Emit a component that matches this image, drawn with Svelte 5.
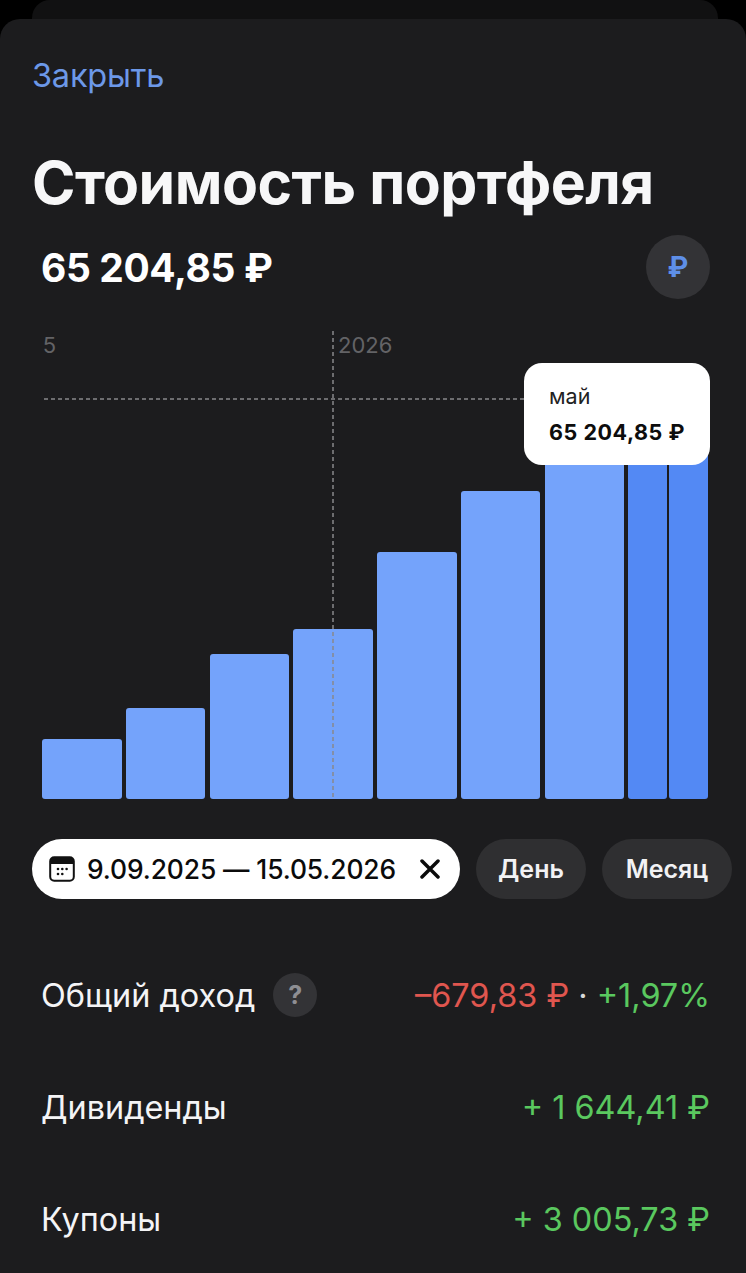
<script>
  const bars = [
    { w: 79.5, h: 60 },
    { w: 79.5, h: 91 },
    { w: 79.5, h: 145 },
    { w: 79.5, h: 170 },
    { w: 79.5, h: 247 },
    { w: 79.5, h: 308 },
    { w: 79.5, h: 350 },
    { w: 39, h: 350, active: true },
    { w: 39, h: 350, active: true, tight: true }
  ];

  const rows = [
    { label: 'Дивиденды', value: '+ 1 644,41 ₽' },
    { label: 'Купоны', value: '+ 3 005,73 ₽' }
  ];
</script>

<div class="page">
  <div class="back-card"></div>
  <div class="sheet">
    <div class="close">Закрыть</div>
    <h1>Стоимость портфеля</h1>

    <div class="total-row">
      <span class="total">65 204,85 ₽</span>
      <span class="currency">₽</span>
    </div>

    <div class="chart">
      <span class="year year-old">5</span>
      <span class="year year-new">2026</span>
      <div class="line-v"></div>
      <div class="line-h"></div>
      <div class="tooltip">
        <div class="tip-month">май</div>
        <div class="tip-value">65 204,85 ₽</div>
      </div>
      <div class="bars">
        {#each bars as bar}
          <div
            class="bar"
            class:active={bar.active}
            class:tight={bar.tight}
            style="width: {bar.w}px; height: {bar.h}px"
          ></div>
        {/each}
      </div>
    </div>

    <div class="filters">
      <div class="range">
        <svg class="calendar" width="26" height="26" viewBox="0 0 26 26">
          <rect x="1.2" y="1.2" width="23.6" height="23.6" rx="4" fill="none" stroke="#111" stroke-width="2" />
          <path d="M1 6a5 5 0 0 1 5-5h14a5 5 0 0 1 5 5v2H1z" fill="#111" />
          <g fill="#111">
            <circle cx="9" cy="13" r="1.3" /><circle cx="13.3" cy="13" r="1.3" /><circle cx="17.6" cy="13" r="1.3" />
            <circle cx="9" cy="18" r="1.3" /><circle cx="13.3" cy="18" r="1.3" />
          </g>
        </svg>
        <span class="dates">9.09.2025 — 15.05.2026</span>
        <svg class="cross" width="20" height="20" viewBox="0 0 20 20">
          <path d="M2 2l16 16M18 2L2 18" stroke="#0b0b0b" stroke-width="3.5" stroke-linecap="round" fill="none" />
        </svg>
      </div>
      <div class="chip day">День</div>
      <div class="chip month">Месяц</div>
    </div>

    <div class="rows">
      <div class="row">
        <span class="label">Общий доход <span class="hint">?</span></span>
        <span class="value"><span class="red">–679,83 ₽</span> <span class="dot">·</span> +1,97%</span>
      </div>
      {#each rows as row}
        <div class="row">
          <span class="label">{row.label}</span>
          <span class="value">{row.value}</span>
        </div>
      {/each}
    </div>
  </div>
</div>

<style>
  :global(body) {
    margin: 0;
    background: #000;
  }

  .page {
    position: relative;
    width: 746px;
    height: 1273px;
    overflow: hidden;
    font-family: Inter, "Noto Sans", sans-serif;
    background: #000;
  }

  .back-card {
    position: absolute;
    left: 32px;
    top: 0;
    width: 686px;
    height: 40px;
    border-radius: 18px 18px 0 0;
    background: #111112;
  }

  .sheet {
    position: absolute;
    left: 0;
    top: 19px;
    width: 746px;
    height: 1254px;
    box-sizing: border-box;
    padding-top: 37px;
    border-radius: 20px 20px 0 0;
    background: #1c1c1e;
  }

  .close {
    margin-left: 32px;
    font-size: 32.5px;
    line-height: 40px;
    letter-spacing: -0.2px;
    color: #6c98e8;
  }

  h1 {
    margin: 56px 0 0 32px;
    font-size: 58.8px;
    line-height: 62px;
    font-weight: 700;
    letter-spacing: -0.5px;
    color: #f7f7f8;
    white-space: nowrap;
  }

  .total-row {
    display: flex;
    align-items: center;
    justify-content: space-between;
    margin-top: 20px;
    padding: 0 36px 0 41px;
  }

  .total {
    padding-top: 2px;
    font-size: 39px;
    line-height: 64px;
    font-weight: 700;
    letter-spacing: -0.4px;
    color: #fff;
  }

  .currency {
    display: flex;
    align-items: center;
    justify-content: center;
    width: 64px;
    height: 64px;
    border-radius: 50%;
    font-size: 28px;
    font-weight: 700;
    color: #5e8fe8;
    background: #333336;
  }

  .chart {
    position: relative;
    height: 468px;
    margin-top: 31px;
  }

  .year {
    position: absolute;
    top: 0;
    font-size: 22px;
    line-height: 28px;
    color: #636366;
  }

  .year-old {
    left: 42px;
    width: 14px;
    overflow: hidden;
    direction: rtl;
  }

  .year-new {
    left: 338px;
  }

  .line-v {
    position: absolute;
    left: 332px;
    top: 0;
    bottom: 0;
    z-index: 2;
    width: 2px;
    opacity: 0.75;
    background: repeating-linear-gradient(to bottom, #88888b 0 4px, transparent 4px 7px);
  }

  .line-h {
    position: absolute;
    left: 44px;
    top: 67px;
    width: 480px;
    height: 2px;
    opacity: 0.75;
    background: repeating-linear-gradient(to right, #88888b 0 4px, transparent 4px 7px);
  }

  .tooltip {
    position: absolute;
    left: 524px;
    top: 32px;
    z-index: 3;
    box-sizing: border-box;
    width: 186px;
    height: 102px;
    padding: 18px 0 0 25px;
    border-radius: 18px;
    background: #fff;
  }

  .tip-month {
    font-size: 21.5px;
    line-height: 30px;
    color: #222;
  }

  .tip-value {
    margin-top: 7px;
    font-size: 21.5px;
    line-height: 28px;
    font-weight: 700;
    letter-spacing: 0.55px;
    color: #0d0d0d;
  }

  .bars {
    position: absolute;
    left: 42px;
    bottom: 0;
    display: flex;
    align-items: flex-end;
    gap: 4.25px;
  }

  .bar {
    flex: none;
    border-radius: 3px;
    background: #74a3fb;
  }

  .bar.active {
    background: #5389f4;
  }

  .bar.tight {
    margin-left: -2.25px;
  }

  .filters {
    display: flex;
    gap: 16px;
    margin-top: 40px;
    padding-left: 32px;
  }

  .range {
    display: flex;
    align-items: center;
    box-sizing: border-box;
    width: 428px;
    height: 60px;
    padding-left: 17px;
    border-radius: 30px;
    background: #fff;
  }

  .dates {
    margin-left: 12px;
    font-size: 26.4px;
    font-weight: 500;
    letter-spacing: -0.1px;
    white-space: nowrap;
    color: #0b0b0b;
  }

  .cross {
    margin-left: auto;
    margin-right: 20px;
    flex: none;
  }

  .chip {
    display: flex;
    align-items: center;
    justify-content: center;
    box-sizing: border-box;
    height: 60px;
    border-radius: 30px;
    font-size: 25px;
    font-weight: 600;
    color: #f2f2f4;
    background: #2f2f31;
  }

  .day {
    width: 110px;
  }

  .month {
    width: 130px;
  }

  .rows {
    display: flex;
    flex-direction: column;
    gap: 68px;
    margin-top: 74px;
    padding: 0 36px 0 41px;
  }

  .row {
    display: flex;
    align-items: center;
    justify-content: space-between;
    height: 44px;
    font-size: 32.4px;
    white-space: nowrap;
  }

  .label {
    display: flex;
    align-items: center;
    gap: 18px;
    color: #f4f4f6;
  }

  .hint {
    display: flex;
    align-items: center;
    justify-content: center;
    width: 44px;
    height: 44px;
    border-radius: 50%;
    font-size: 25px;
    font-weight: 700;
    color: #8e8e93;
    background: #333336;
  }

  .value {
    color: #5ac85f;
  }

  .red {
    color: #e0564f;
  }

  .dot {
    color: #d8d8da;
  }
</style>
